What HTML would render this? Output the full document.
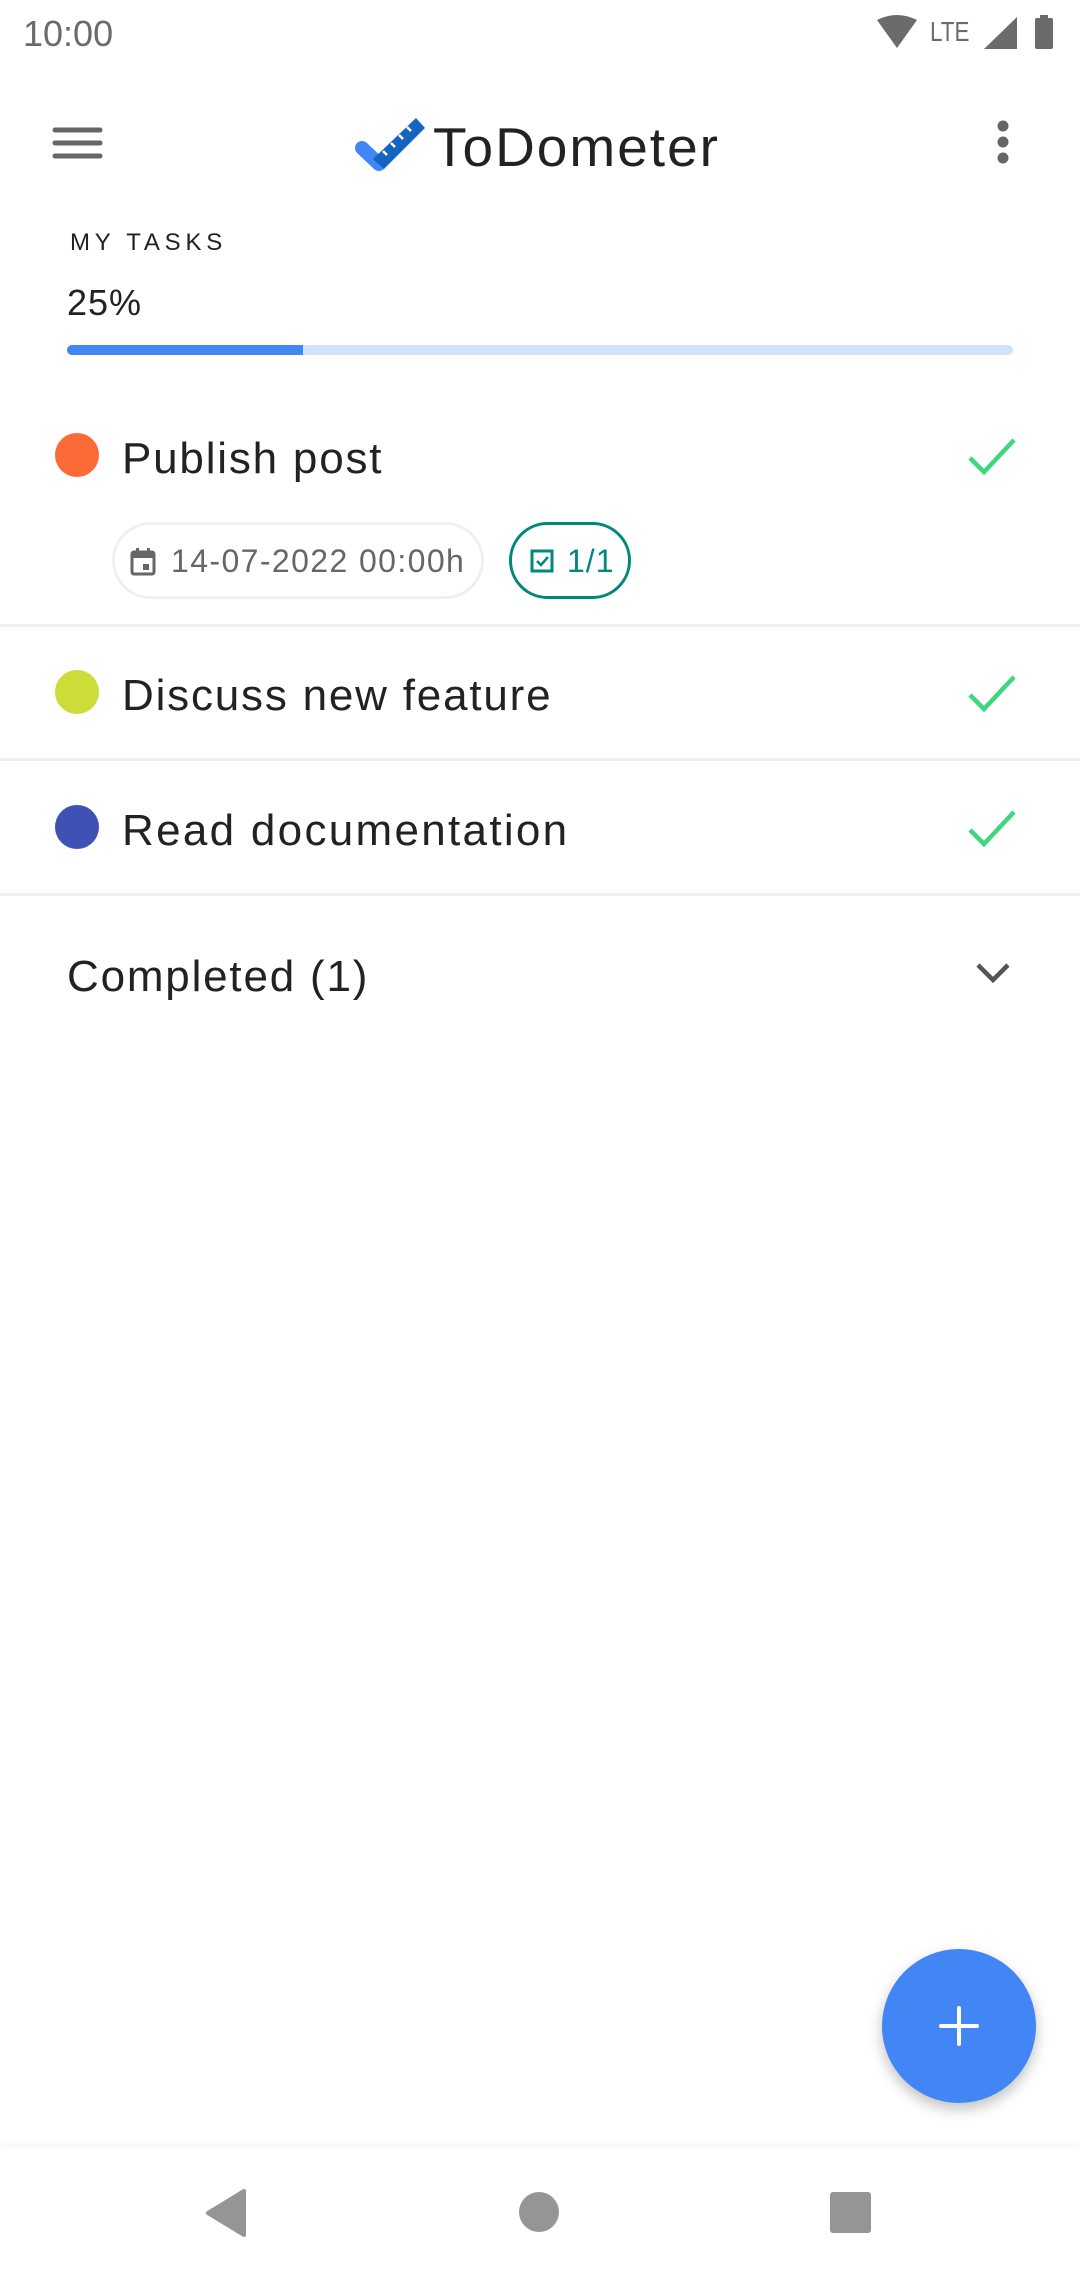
<!DOCTYPE html>
<html><head><meta charset="utf-8">
<style>
*{margin:0;padding:0;box-sizing:border-box}
body{width:1080px;height:2280px;background:#fff;position:relative;overflow:hidden;font-family:"Liberation Sans",sans-serif;color:#1f1f1f}
.a{position:absolute;white-space:nowrap}
.dot{position:absolute;width:44px;height:44px;border-radius:50%}
.task{font-size:44px;line-height:1;color:#222;letter-spacing:1.8px}
.div{position:absolute;left:0;width:1080px;height:3px;background:#efefef}
</style></head><body>
<div class="a" style="left:23px;top:13px;font-size:36px;color:#6b6b6b">10:00</div>
<svg class="a" style="left:875px;top:14px" width="190" height="40" viewBox="0 0 190 40">
<path d="M2 6 Q22 -4 42 6 L22 34 Z" fill="#6b6b6b"/>
<path d="M109 35 L142 3 L142 35 Z" fill="#6b6b6b"/>
<rect x="160" y="4" width="18" height="31" rx="2" fill="#6b6b6b"/><rect x="165" y="1" width="8" height="4" fill="#6b6b6b"/>
</svg>
<div class="a" style="left:930px;top:16px;font-size:28px;color:#6b6b6b;transform:scaleX(0.8);transform-origin:left">LTE</div>
<svg class="a" style="left:52px;top:126px" width="52" height="34"><g stroke="#666" stroke-width="5" stroke-linecap="round"><line x1="3" y1="4" x2="48" y2="4"/><line x1="3" y1="17" x2="48" y2="17"/><line x1="3" y1="30" x2="48" y2="30"/></g></svg>
<svg class="a" style="left:350px;top:112px" width="80" height="62" viewBox="0 0 80 62">
<line x1="12" y1="36" x2="29" y2="52" stroke="#4285f4" stroke-width="14" stroke-linecap="round"/>
<path d="M23 47 L66 6 L75 16 L34 57 Z" fill="#1565c0"/>
<g stroke="#fff" stroke-width="2.5"><line x1="33" y1="39" x2="37" y2="43"/><line x1="41" y1="31" x2="45" y2="35"/><line x1="49" y1="23" x2="53" y2="27"/><line x1="57" y1="15" x2="61" y2="19"/></g>
</svg>
<div class="a" style="left:433px;top:115px;font-size:55px;color:#222;letter-spacing:2px">ToDometer</div>
<svg class="a" style="left:993px;top:118px" width="20" height="48"><g fill="#666"><circle cx="10" cy="8" r="5.5"/><circle cx="10" cy="24" r="5.5"/><circle cx="10" cy="40" r="5.5"/></g></svg>
<div class="a" style="left:70px;top:229px;font-size:24px;letter-spacing:4.8px;color:#222">MY TASKS</div>
<div class="a" style="left:67px;top:282px;font-size:36px;color:#222;letter-spacing:1px">25%</div>
<div class="a" style="left:67px;top:345px;width:946px;height:10px;border-radius:5px;background:#d2e2fb;overflow:hidden"><div style="width:236px;height:10px;background:#4285f4"></div></div>

<div class="dot" style="left:55px;top:433px;background:#fc6a37"></div>
<div class="a task" style="left:122px;top:437px">Publish post</div>
<svg class="a" style="left:966px;top:434px" width="52" height="44"><path d="M4 24 L18 38 L48 6" fill="none" stroke="#3ed67e" stroke-width="4.5"/></svg>
<div class="a" style="left:112px;top:522px;width:372px;height:77px;border:3px solid #f0f0f0;border-radius:39px"></div>
<svg class="a" style="left:130px;top:547px" width="26" height="29" viewBox="0 0 26 29"><rect x="2" y="5" width="22" height="22" rx="2" fill="none" stroke="#666" stroke-width="3"/><rect x="2" y="5" width="22" height="6" fill="#666"/><rect x="6" y="1" width="3" height="6" fill="#666"/><rect x="17" y="1" width="3" height="6" fill="#666"/><rect x="13" y="17" width="6" height="6" fill="#666"/></svg>
<div class="a" style="left:171px;top:543px;font-size:32px;color:#666;letter-spacing:1.4px">14-07-2022 00:00h</div>
<div class="a" style="left:509px;top:522px;width:122px;height:77px;border:3px solid #00897b;border-radius:39px"></div>
<svg class="a" style="left:530px;top:549px" width="24" height="24"><rect x="2" y="2" width="20" height="20" fill="none" stroke="#00897b" stroke-width="3"/><path d="M7 12 L11 16 L18 8" fill="none" stroke="#00897b" stroke-width="2.5"/></svg>
<div class="a" style="left:567px;top:543px;font-size:32px;color:#00897b;letter-spacing:1px">1/1</div>
<div class="div" style="top:624px"></div>

<div class="dot" style="left:55px;top:670px;background:#cddc39"></div>
<div class="a task" style="left:122px;top:674px">Discuss new feature</div>
<svg class="a" style="left:966px;top:671px" width="52" height="44"><path d="M4 24 L18 38 L48 6" fill="none" stroke="#3ed67e" stroke-width="4.5"/></svg>
<div class="div" style="top:758px"></div>

<div class="dot" style="left:55px;top:805px;background:#3f51b5"></div>
<div class="a task" style="left:122px;top:809px;letter-spacing:2.3px">Read documentation</div>
<svg class="a" style="left:966px;top:806px" width="52" height="44"><path d="M4 24 L18 38 L48 6" fill="none" stroke="#3ed67e" stroke-width="4.5"/></svg>
<div class="div" style="top:893px"></div>

<div class="a task" style="left:67px;top:955px">Completed (1)</div>
<svg class="a" style="left:974px;top:960px" width="38" height="26"><path d="M4 5 L19 20 L34 5" fill="none" stroke="#555" stroke-width="4.5"/></svg>

<div class="a" style="left:882px;top:1949px;width:154px;height:154px;border-radius:50%;background:#4285f4;box-shadow:0 6px 14px rgba(0,0,0,0.25)"></div>
<svg class="a" style="left:939px;top:2006px" width="40" height="40"><g stroke="#fff" stroke-width="4" stroke-linecap="round"><line x1="20" y1="2" x2="20" y2="38"/><line x1="2" y1="20" x2="38" y2="20"/></g></svg>

<div class="a" style="left:0;top:2147px;width:1080px;height:133px;background:#fff;box-shadow:0 -3px 8px rgba(0,0,0,0.04)"></div>
<svg class="a" style="left:200px;top:2188px" width="50" height="50"><path d="M44 3 L44 47 L8 25 Z" fill="#959595" stroke="#959595" stroke-width="4" stroke-linejoin="round"/></svg>
<div class="a" style="left:519px;top:2192px;width:40px;height:40px;border-radius:50%;background:#959595"></div>
<div class="a" style="left:830px;top:2192px;width:41px;height:41px;border-radius:3px;background:#959595"></div>
</body></html>
